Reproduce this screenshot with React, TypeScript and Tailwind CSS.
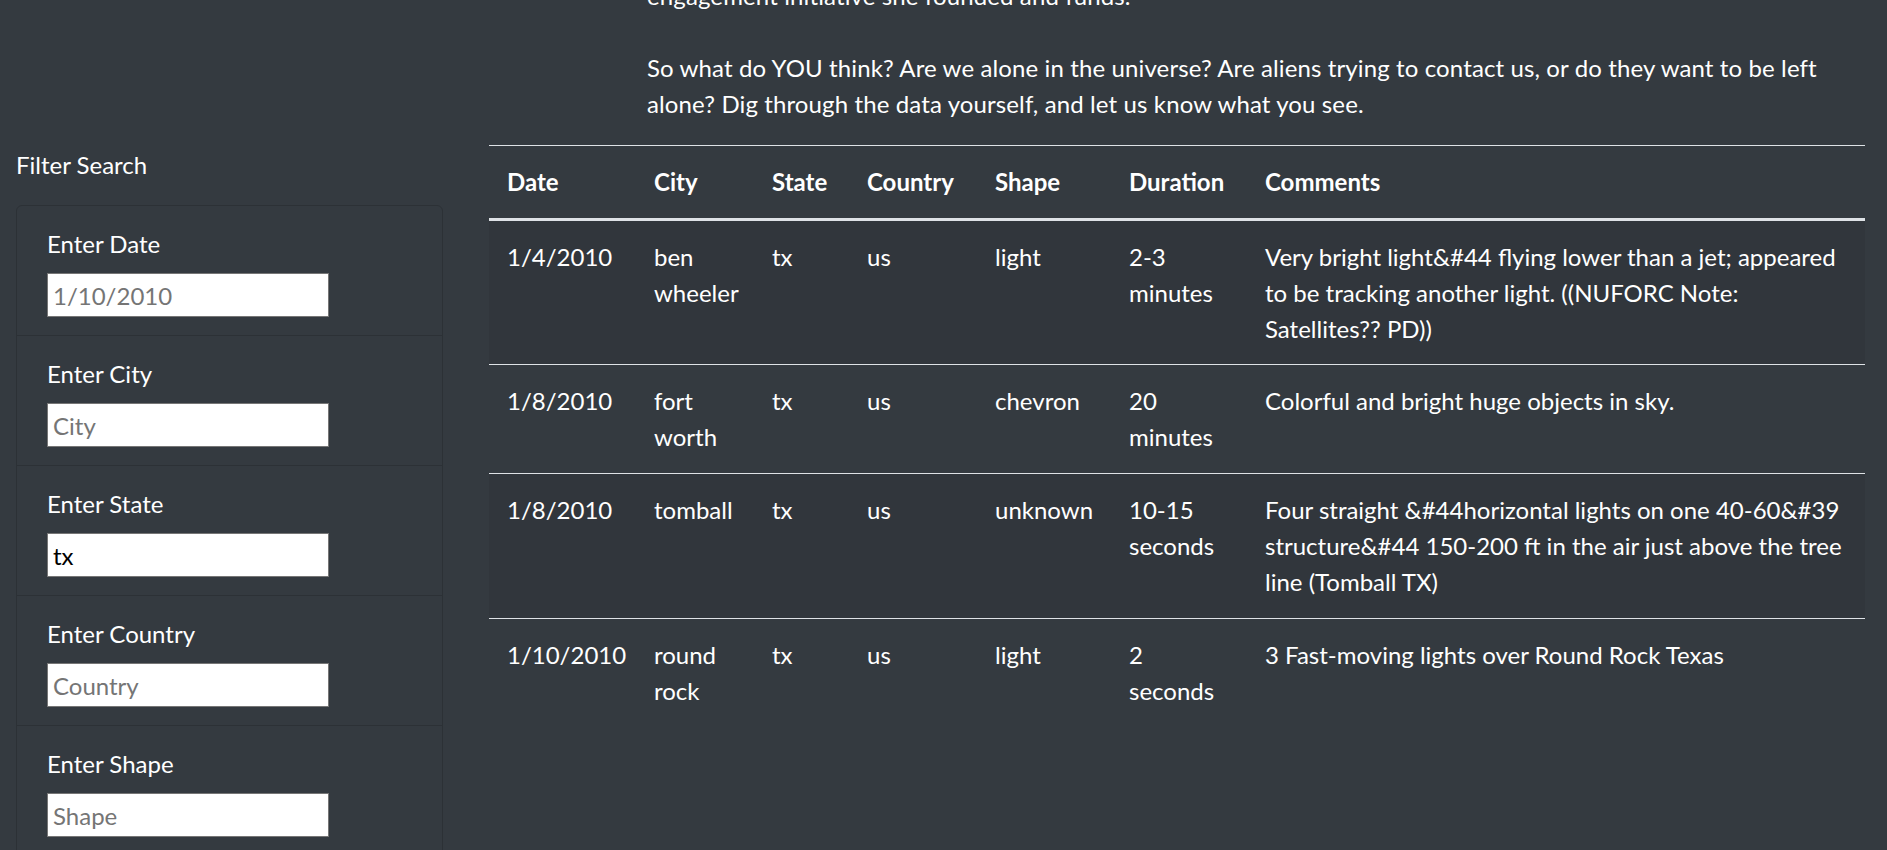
import React from 'react';

type Sighting = {
    date: string;
    city: string;
    state: string;
    country: string;
    shape: string;
    duration: string;
    comments: string;
};

const sightings: Sighting[] = [
    {
        date: '1/4/2010',
        city: 'ben wheeler',
        state: 'tx',
        country: 'us',
        shape: 'light',
        duration: '2-3 minutes',
        comments: 'Very bright light&#44 flying lower than a jet; appeared to be tracking another light. ((NUFORC Note: Satellites?? PD))',
    },
    {
        date: '1/8/2010',
        city: 'fort worth',
        state: 'tx',
        country: 'us',
        shape: 'chevron',
        duration: '20 minutes',
        comments: 'Colorful and bright huge objects in sky.',
    },
    {
        date: '1/8/2010',
        city: 'tomball',
        state: 'tx',
        country: 'us',
        shape: 'unknown',
        duration: '10-15 seconds',
        comments: 'Four straight &#44horizontal lights on one 40-60&#39 structure&#44 150-200 ft in the air just above the tree line (Tomball TX)',
    },
    {
        date: '1/10/2010',
        city: 'round rock',
        state: 'tx',
        country: 'us',
        shape: 'light',
        duration: '2 seconds',
        comments: '3 Fast-moving lights over Round Rock Texas',
    },
];

const filters = [
    { label: 'Enter Date', placeholder: '1/10/2010', value: '' },
    { label: 'Enter City', placeholder: 'City', value: '' },
    { label: 'Enter State', placeholder: 'State', value: 'tx' },
    { label: 'Enter Country', placeholder: 'Country', value: '' },
    { label: 'Enter Shape', placeholder: 'Shape', value: '' },
];

const columns = ['Date', 'City', 'State', 'Country', 'Shape', 'Duration', 'Comments'];

const App: React.FC = () => {
    return (
        <div className="h-[850px] overflow-hidden bg-[#343a40] text-white font-['Lato','Liberation_Sans',sans-serif] text-[24px] leading-[36px]">
            {/* Intro text, scrolled partly out of view */}
            <div className="ml-[647px] mt-[-22px] w-[1210px]">
                <p className="tracking-[0.12px]">
                    engagement initiative she founded and funds.
                    <br />
                    <br />
                    So what do YOU think? Are we alone in the universe? Are aliens trying to contact us, or do they want to be left alone? Dig through the data yourself, and let us know what you see.
                </p>
            </div>

            <div className="mt-[23px] flex">
                {/* Filters */}
                <aside className="w-[489px] shrink-0 pl-[16px] pt-[2px]">
                    <div>Filter Search</div>
                    <ul className="mt-[22px] w-[427px] rounded-[6px] border border-[#2c3136]">
                        {filters.map((f) => (
                            <li key={f.label} className="border-b border-[#2c3136] px-[30px] pt-[20px] pb-[18px]">
                                <label className="block">{f.label}</label>
                                <input
                                    type="text"
                                    placeholder={f.placeholder}
                                    defaultValue={f.value}
                                    className="mt-[11px] block h-[44px] w-[282px] border border-[#767676] bg-white px-[5px] text-[24px] text-black placeholder:text-[#757575] outline-none"
                                />
                            </li>
                        ))}
                    </ul>
                </aside>

                {/* Results */}
                <div className="w-[1376px] shrink-0">
                    <table className="w-full table-fixed border-collapse text-left">
                        <colgroup>
                            <col className="w-[147px]" />
                            <col className="w-[118px]" />
                            <col className="w-[95px]" />
                            <col className="w-[128px]" />
                            <col className="w-[134px]" />
                            <col className="w-[136px]" />
                            <col />
                        </colgroup>
                        <thead>
                            <tr>
                                {columns.map((c) => (
                                    <th key={c} className="border-t border-b-[3px] border-t-[#dee2e6] border-b-[#dee2e6] p-[18px] align-bottom font-bold">
                                        {c}
                                    </th>
                                ))}
                            </tr>
                        </thead>
                        <tbody>
                            {sightings.map((s, i) => (
                                <tr key={i} className={i % 2 === 0 ? 'bg-[#31363c]' : ''}>
                                    {[s.date, s.city, s.state, s.country, s.shape, s.duration, s.comments].map((v, j) => (
                                        <td
                                            key={j}
                                            className={
                                                i === 0
                                                    ? 'px-[18px] pt-[18px] pb-[17px] align-top'
                                                    : 'border-t border-[#dee2e6] p-[18px] align-top'
                                            }
                                        >
                                            {v}
                                        </td>
                                    ))}
                                </tr>
                            ))}
                        </tbody>
                    </table>
                </div>
            </div>
        </div>
    );
};

export default App;
